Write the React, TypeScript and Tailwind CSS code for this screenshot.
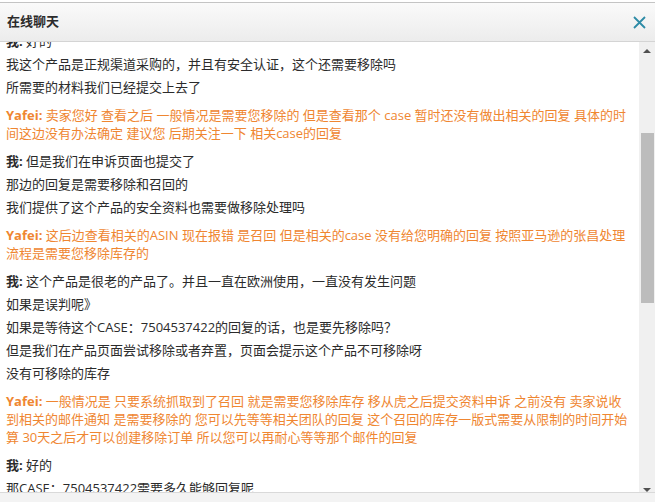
import React from "react";

type Msg = { who: "me" | "yafei"; lines: string[] };

const messages: Msg[] = [
  { who: "me", lines: ["好的", "我这个产品是正规渠道采购的，并且有安全认证，这个还需要移除吗", "所需要的材料我们已经提交上去了"] },
  {
    who: "yafei",
    lines: ["卖家您好 查看之后 一般情况是需要您移除的 但是查看那个 case 暂时还没有做出相关的回复 具体的时间这边没有办法确定 建议您 后期关注一下 相关case的回复"],
  },
  { who: "me", lines: ["但是我们在申诉页面也提交了", "那边的回复是需要移除和召回的", "我们提供了这个产品的安全资料也需要做移除处理吗"] },
  {
    who: "yafei",
    lines: ["这后边查看相关的ASIN 现在报错 是召回 但是相关的case 没有给您明确的回复 按照亚马逊的张昌处理流程是需要您移除库存的"],
  },
  {
    who: "me",
    lines: [
      "这个产品是很老的产品了。并且一直在欧洲使用，一直没有发生问题",
      "如果是误判呢》",
      "如果是等待这个CASE：7504537422的回复的话，也是要先移除吗？",
      "但是我们在产品页面尝试移除或者弃置，页面会提示这个产品不可移除呀",
      "没有可移除的库存",
    ],
  },
  {
    who: "yafei",
    lines: [
      "一般情况是 只要系统抓取到了召回 就是需要您移除库存 移从虎之后提交资料申诉 之前没有 卖家说收到相关的邮件通知 是需要移除的 您可以先等等相关团队的回复 这个召回的库存一版式需要从限制的时间开始算 30天之后才可以创建移除订单 所以您可以再耐心等等那个邮件的回复",
    ],
  },
  { who: "me", lines: ["好的", "那CASE：7504537422需要多久能够回复呢"] },
];

const ChatWindow: React.FC = () => {
  return (
    <div
      className="w-[655px] h-[502px] overflow-hidden bg-white pt-[2px] flex flex-col text-[13px] text-[#2b2b2b]"
      style={{ fontFamily: '"Open Sans", "Noto Sans CJK SC", sans-serif' }}
    >
      {/* HEADER */}
      <div className="h-[40px] shrink-0 border-t border-b border-t-[#c4c4c4] border-b-[#d4d4d4] bg-gradient-to-b from-[#fafafa] to-[#ececec] flex items-center justify-between pl-[7px] pr-[9px]">
        <span className="font-bold text-[13px] text-[#2b2b2b]">在线聊天</span>
        <svg width="13" height="13" viewBox="0 0 13 13" className="text-[#2d8ba6]">
          <path d="M1 1L12 12M12 1L1 12" stroke="currentColor" strokeWidth="1.8" />
        </svg>
      </div>

      {/* BODY */}
      <div className="h-[450px] shrink-0 flex">
        <div className="flex-1 overflow-hidden pl-[6px] pr-[8px]">
          <div className="-mt-[15px] leading-[18px]">
            {messages.map((m, i) =>
              m.who === "me" ? (
                <div key={i}>
                  {m.lines.map((line, j) => (
                    <div key={j} className="mt-[5px]">
                      {j === 0 && <span className="font-bold">我: </span>}
                      {line}
                    </div>
                  ))}
                </div>
              ) : (
                <div key={i} className="my-[10px] text-[#ef8631]">
                  <span className="font-bold">Yafei: </span>
                  {m.lines[0]}
                </div>
              )
            )}
          </div>
        </div>

        {/* SCROLLBAR */}
        <div className="w-[16px] shrink-0 bg-[#f0f0f0] flex flex-col items-center overflow-hidden">
          <div className="mt-[7px] w-0 h-0 border-l-[4px] border-r-[4px] border-b-[4px] border-l-transparent border-r-transparent border-b-[#505050]" />
          <div className="mt-[80px] ml-[1px] w-[13px] h-[170px] bg-[#bcbcbc]" />
          <div className="mt-[185px] w-0 h-0 border-l-[4px] border-r-[4px] border-t-[4px] border-l-transparent border-r-transparent border-t-[#505050]" />
        </div>
      </div>

      {/* FOOTER */}
      <div className="flex-1 border-t border-[#d9d9d9] bg-[#f3f3f3]" />
    </div>
  );
};

export default function App() {
  return <ChatWindow />;
}
